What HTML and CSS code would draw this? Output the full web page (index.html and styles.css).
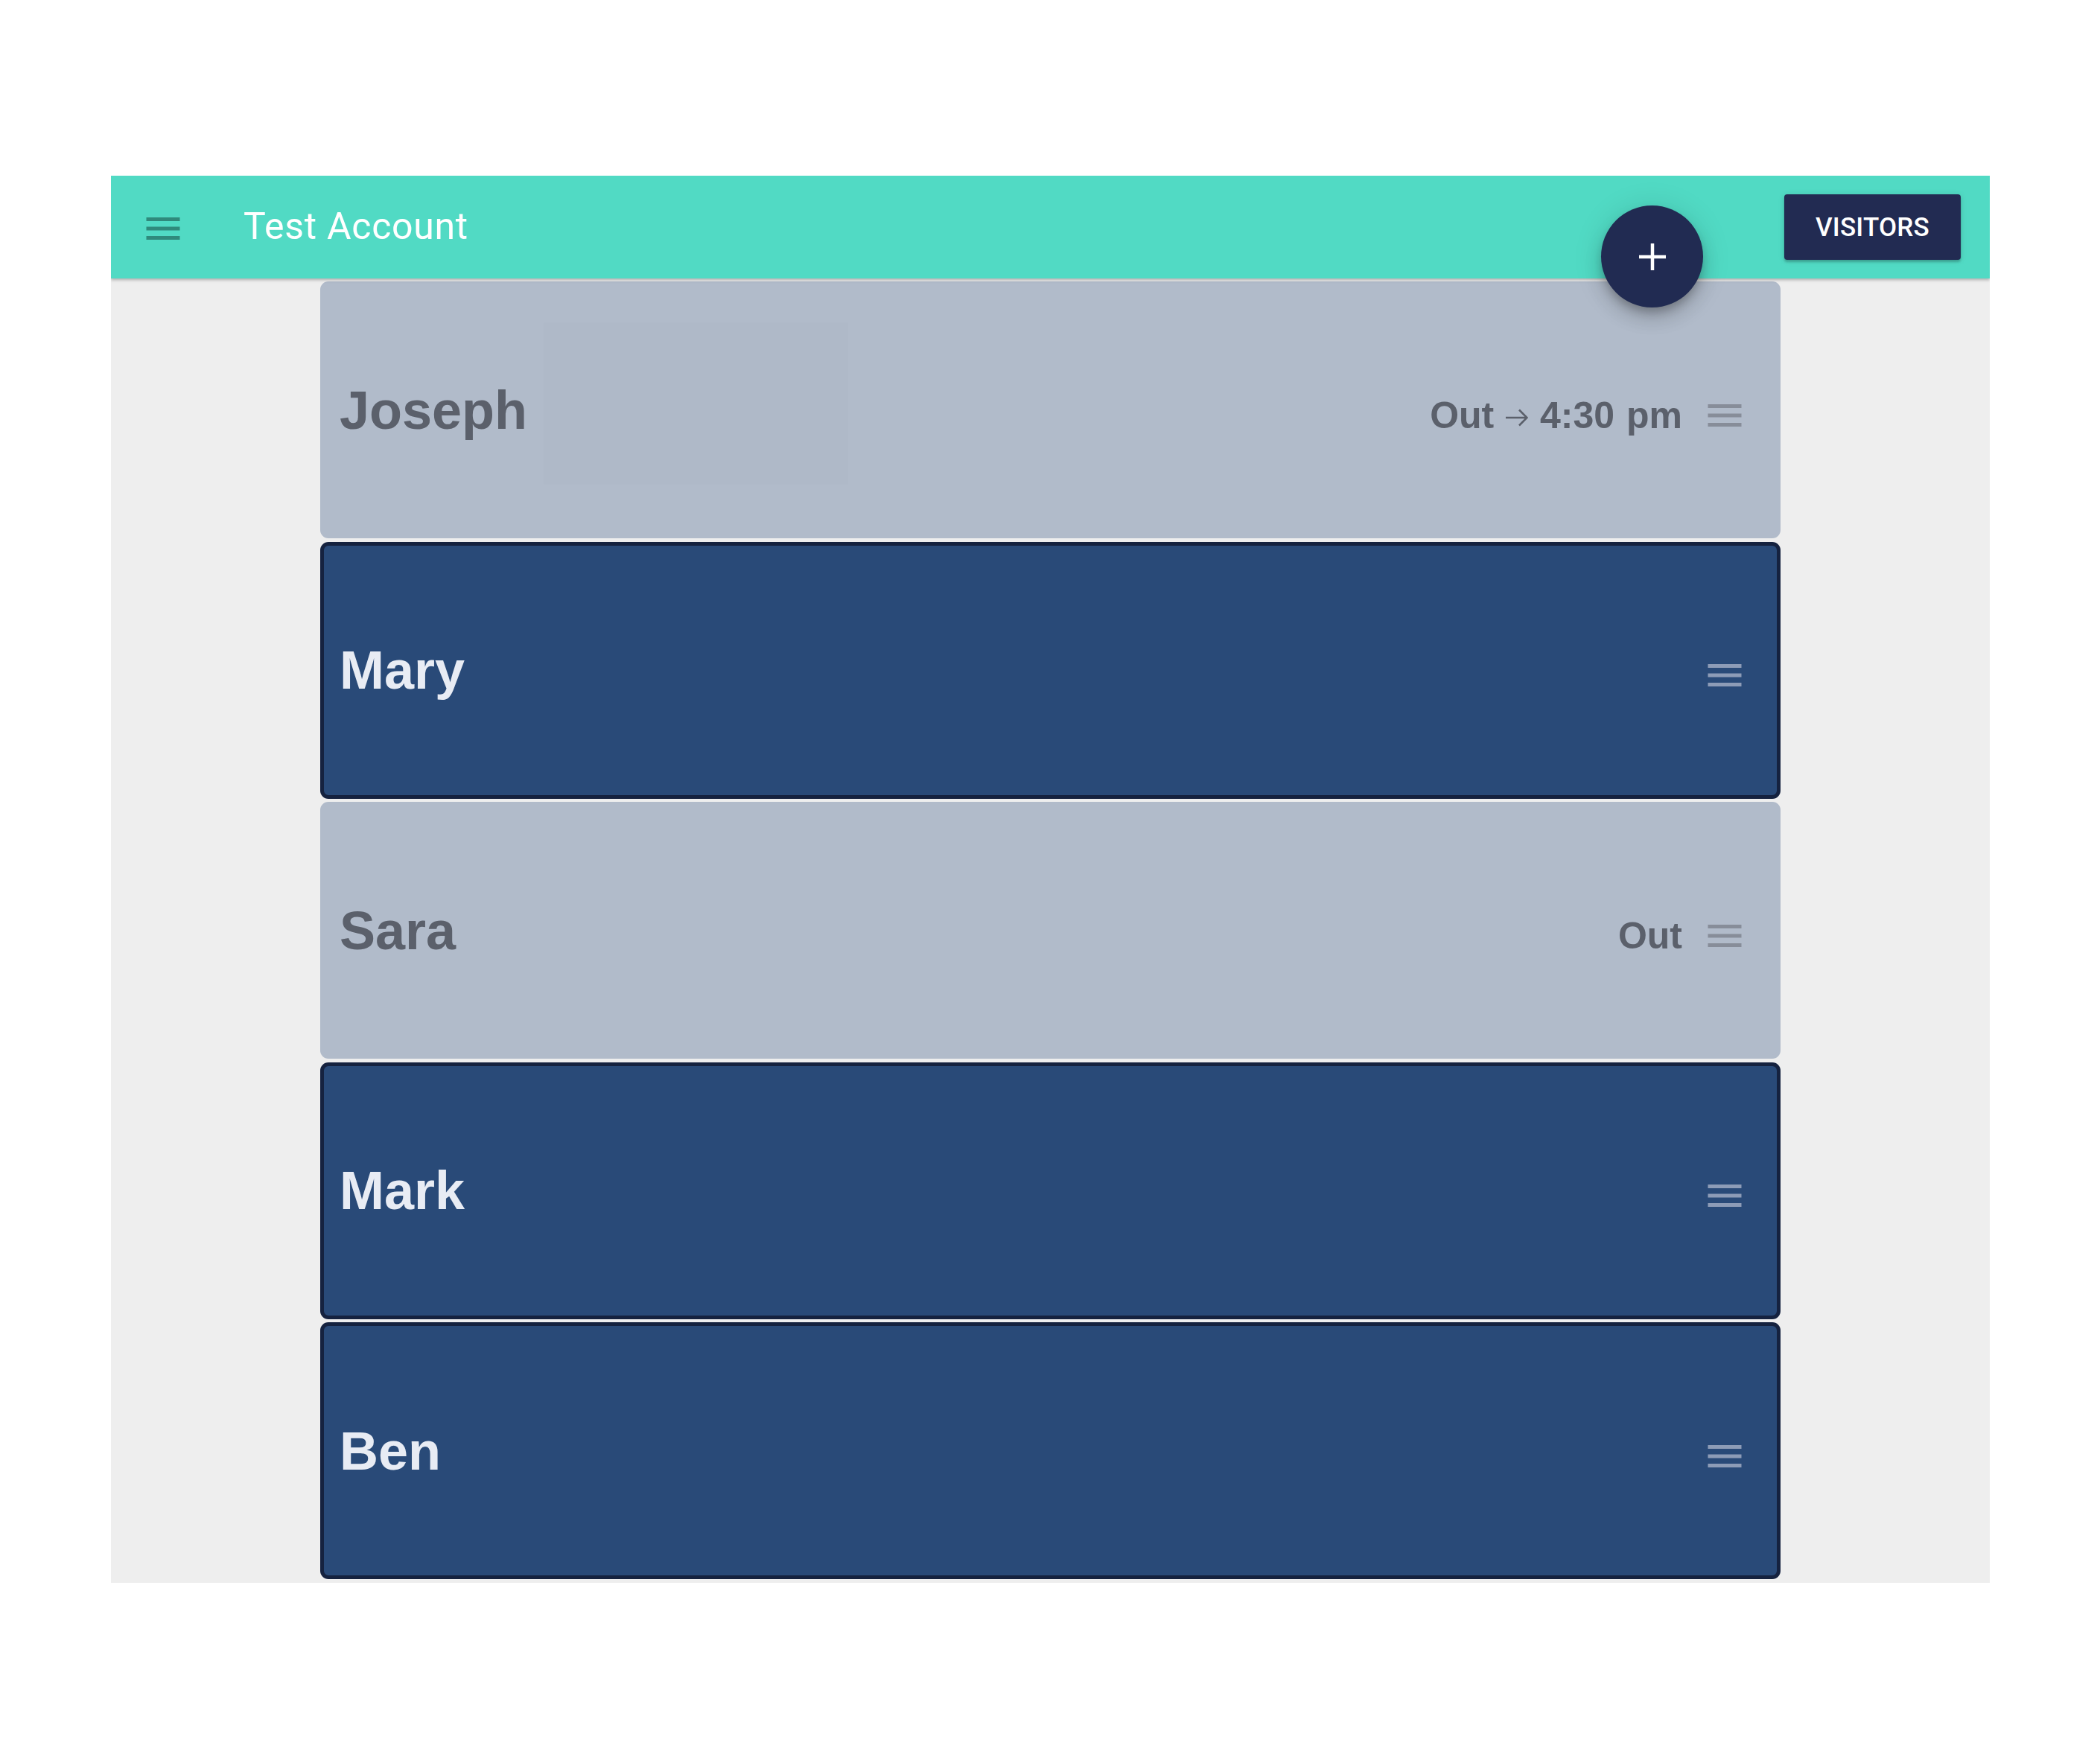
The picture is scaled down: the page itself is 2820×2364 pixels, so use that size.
FILE: index.html
```html
<!DOCTYPE html>
<html lang="en">
<head>
<meta charset="utf-8">
<title>Test Account</title>
<link rel="stylesheet" href="styles.css">
</head>
<body>
<div class="app">
  <header class="topbar">
    <svg class="menu-icon" viewBox="0 0 24 24" width="60" height="60"><path d="M3 18h18v-2H3v2zm0-5h18v-2H3v2zm0-7v2h18V6H3z"/></svg>
    <div class="title">Test Account</div>
    <div class="spacer"></div>
    <button class="fab" type="button" aria-label="Add">
      <svg viewBox="0 0 36 36" width="36" height="36"><rect x="15.75" y="0" width="4.5" height="36"/><rect x="0" y="15.75" width="36" height="4.5"/></svg>
    </button>
    <button class="visitors" type="button">VISITORS</button>
  </header>
  <main class="list">
    <div class="card card-out">
      <div class="ghost"></div>
      <div class="name">Joseph</div>
      <div class="meta">
        <span class="status">Out <svg class="arrow" viewBox="0 0 30 24" width="30" height="24"><path d="M0 12H28M18 1.5L28.5 12L18 22.5"/></svg> 4:30 pm</span>
        <svg class="handle" viewBox="0 0 24 24" width="60" height="60"><path d="M3 18h18v-2H3v2zm0-5h18v-2H3v2zm0-7v2h18V6H3z"/></svg>
      </div>
    </div>
    <div class="card card-in">
      <div class="name">Mary</div>
      <div class="meta">
        <svg class="handle" viewBox="0 0 24 24" width="60" height="60"><path d="M3 18h18v-2H3v2zm0-5h18v-2H3v2zm0-7v2h18V6H3z"/></svg>
      </div>
    </div>
    <div class="card card-out">
      <div class="name">Sara</div>
      <div class="meta">
        <span class="status">Out</span>
        <svg class="handle" viewBox="0 0 24 24" width="60" height="60"><path d="M3 18h18v-2H3v2zm0-5h18v-2H3v2zm0-7v2h18V6H3z"/></svg>
      </div>
    </div>
    <div class="card card-in">
      <div class="name">Mark</div>
      <div class="meta">
        <svg class="handle" viewBox="0 0 24 24" width="60" height="60"><path d="M3 18h18v-2H3v2zm0-5h18v-2H3v2zm0-7v2h18V6H3z"/></svg>
      </div>
    </div>
    <div class="card card-in">
      <div class="name">Ben</div>
      <div class="meta">
        <svg class="handle" viewBox="0 0 24 24" width="60" height="60"><path d="M3 18h18v-2H3v2zm0-5h18v-2H3v2zm0-7v2h18V6H3z"/></svg>
      </div>
    </div>
  </main>
</div>
</body>
</html>
```
FILE: styles.css
```css
html, body {
  margin: 0;
  padding: 0;
  background: #ffffff;
}

.app {
  margin: 236px 0 0 149px;
  width: 2523px;
  height: 1890px;
  background: #eeeeee;
  display: flex;
  flex-direction: column;
  overflow: hidden;
}

.topbar {
  position: relative;
  z-index: 2;
  flex: 0 0 138px;
  height: 138px;
  background: #51dac4;
  display: flex;
  align-items: center;
  box-shadow: 0 2px 4px rgba(0, 0, 0, 0.28);
}

.menu-icon {
  flex: 0 0 60px;
  margin-left: 40px;
  margin-top: 4px;
  fill: #2f8a7c;
}

.title {
  margin-left: 78px;
  margin-top: -2px;
  font-family: Roboto, "Liberation Sans", sans-serif;
  font-size: 50px;
  font-weight: 400;
  letter-spacing: 0.7px;
  color: #ffffff;
}

.spacer {
  flex: 1;
}

.fab {
  position: absolute;
  left: 2001px;
  top: 40px;
  width: 137px;
  height: 137px;
  padding: 0;
  border: none;
  border-radius: 50%;
  background: #212b52;
  display: flex;
  align-items: center;
  justify-content: center;
  box-shadow: 0 8px 12px -2px rgba(0, 0, 0, 0.2), 0 15px 25px rgba(0, 0, 0, 0.14), 0 3px 40px rgba(0, 0, 0, 0.12);
}

.fab svg {
  fill: #ffffff;
}

.visitors {
  margin-right: 39px;
  width: 237px;
  height: 88px;
  padding: 0;
  border: none;
  border-radius: 4px;
  background: #222b52;
  color: #ffffff;
  font-family: Roboto, "Liberation Sans", sans-serif;
  font-weight: 500;
  font-size: 35px;
  letter-spacing: 0.2px;
  box-shadow: 0 3px 3px rgba(0, 0, 0, 0.2), 0 1px 8px rgba(0, 0, 0, 0.12);
}

.list {
  width: 1961px;
  margin: 4px auto 0;
  display: flex;
  flex-direction: column;
  gap: 4.5px;
}

.card {
  position: relative;
  box-sizing: border-box;
  height: 345px;
  flex: 0 0 345px;
  border: 5px solid transparent;
  border-radius: 11px;
  padding: 0 40px 0 21px;
  display: flex;
  align-items: center;
  font-family: "Liberation Sans", Arial, sans-serif;
  font-weight: 700;
}

.card-out {
  background: #b1bbca;
  border-color: #b1bbca;
  color: #5b606b;
}

.card-in {
  background: #294a78;
  border-color: #15223f;
  color: #e8ecf4;
}

.ghost {
  position: absolute;
  left: 295px;
  top: 50px;
  width: 409px;
  height: 218px;
  background: rgba(0, 0, 0, 0.008);
}

.name {
  position: relative;
  flex: 1;
  font-size: 72px;
  line-height: 1;
}

.meta {
  display: flex;
  align-items: center;
  margin-top: 14px;
}

.status {
  font-size: 50px;
  line-height: 1;
  margin-right: 27px;
  word-spacing: 2px;
}

.arrow {
  vertical-align: 2px;
  fill: none;
  stroke: #5b606b;
  stroke-width: 2.6;
}

.handle {
  flex: 0 0 60px;
}

.card-out .handle {
  fill: #878d99;
}

.card-in .handle {
  fill: #8d9cb7;
}
```
